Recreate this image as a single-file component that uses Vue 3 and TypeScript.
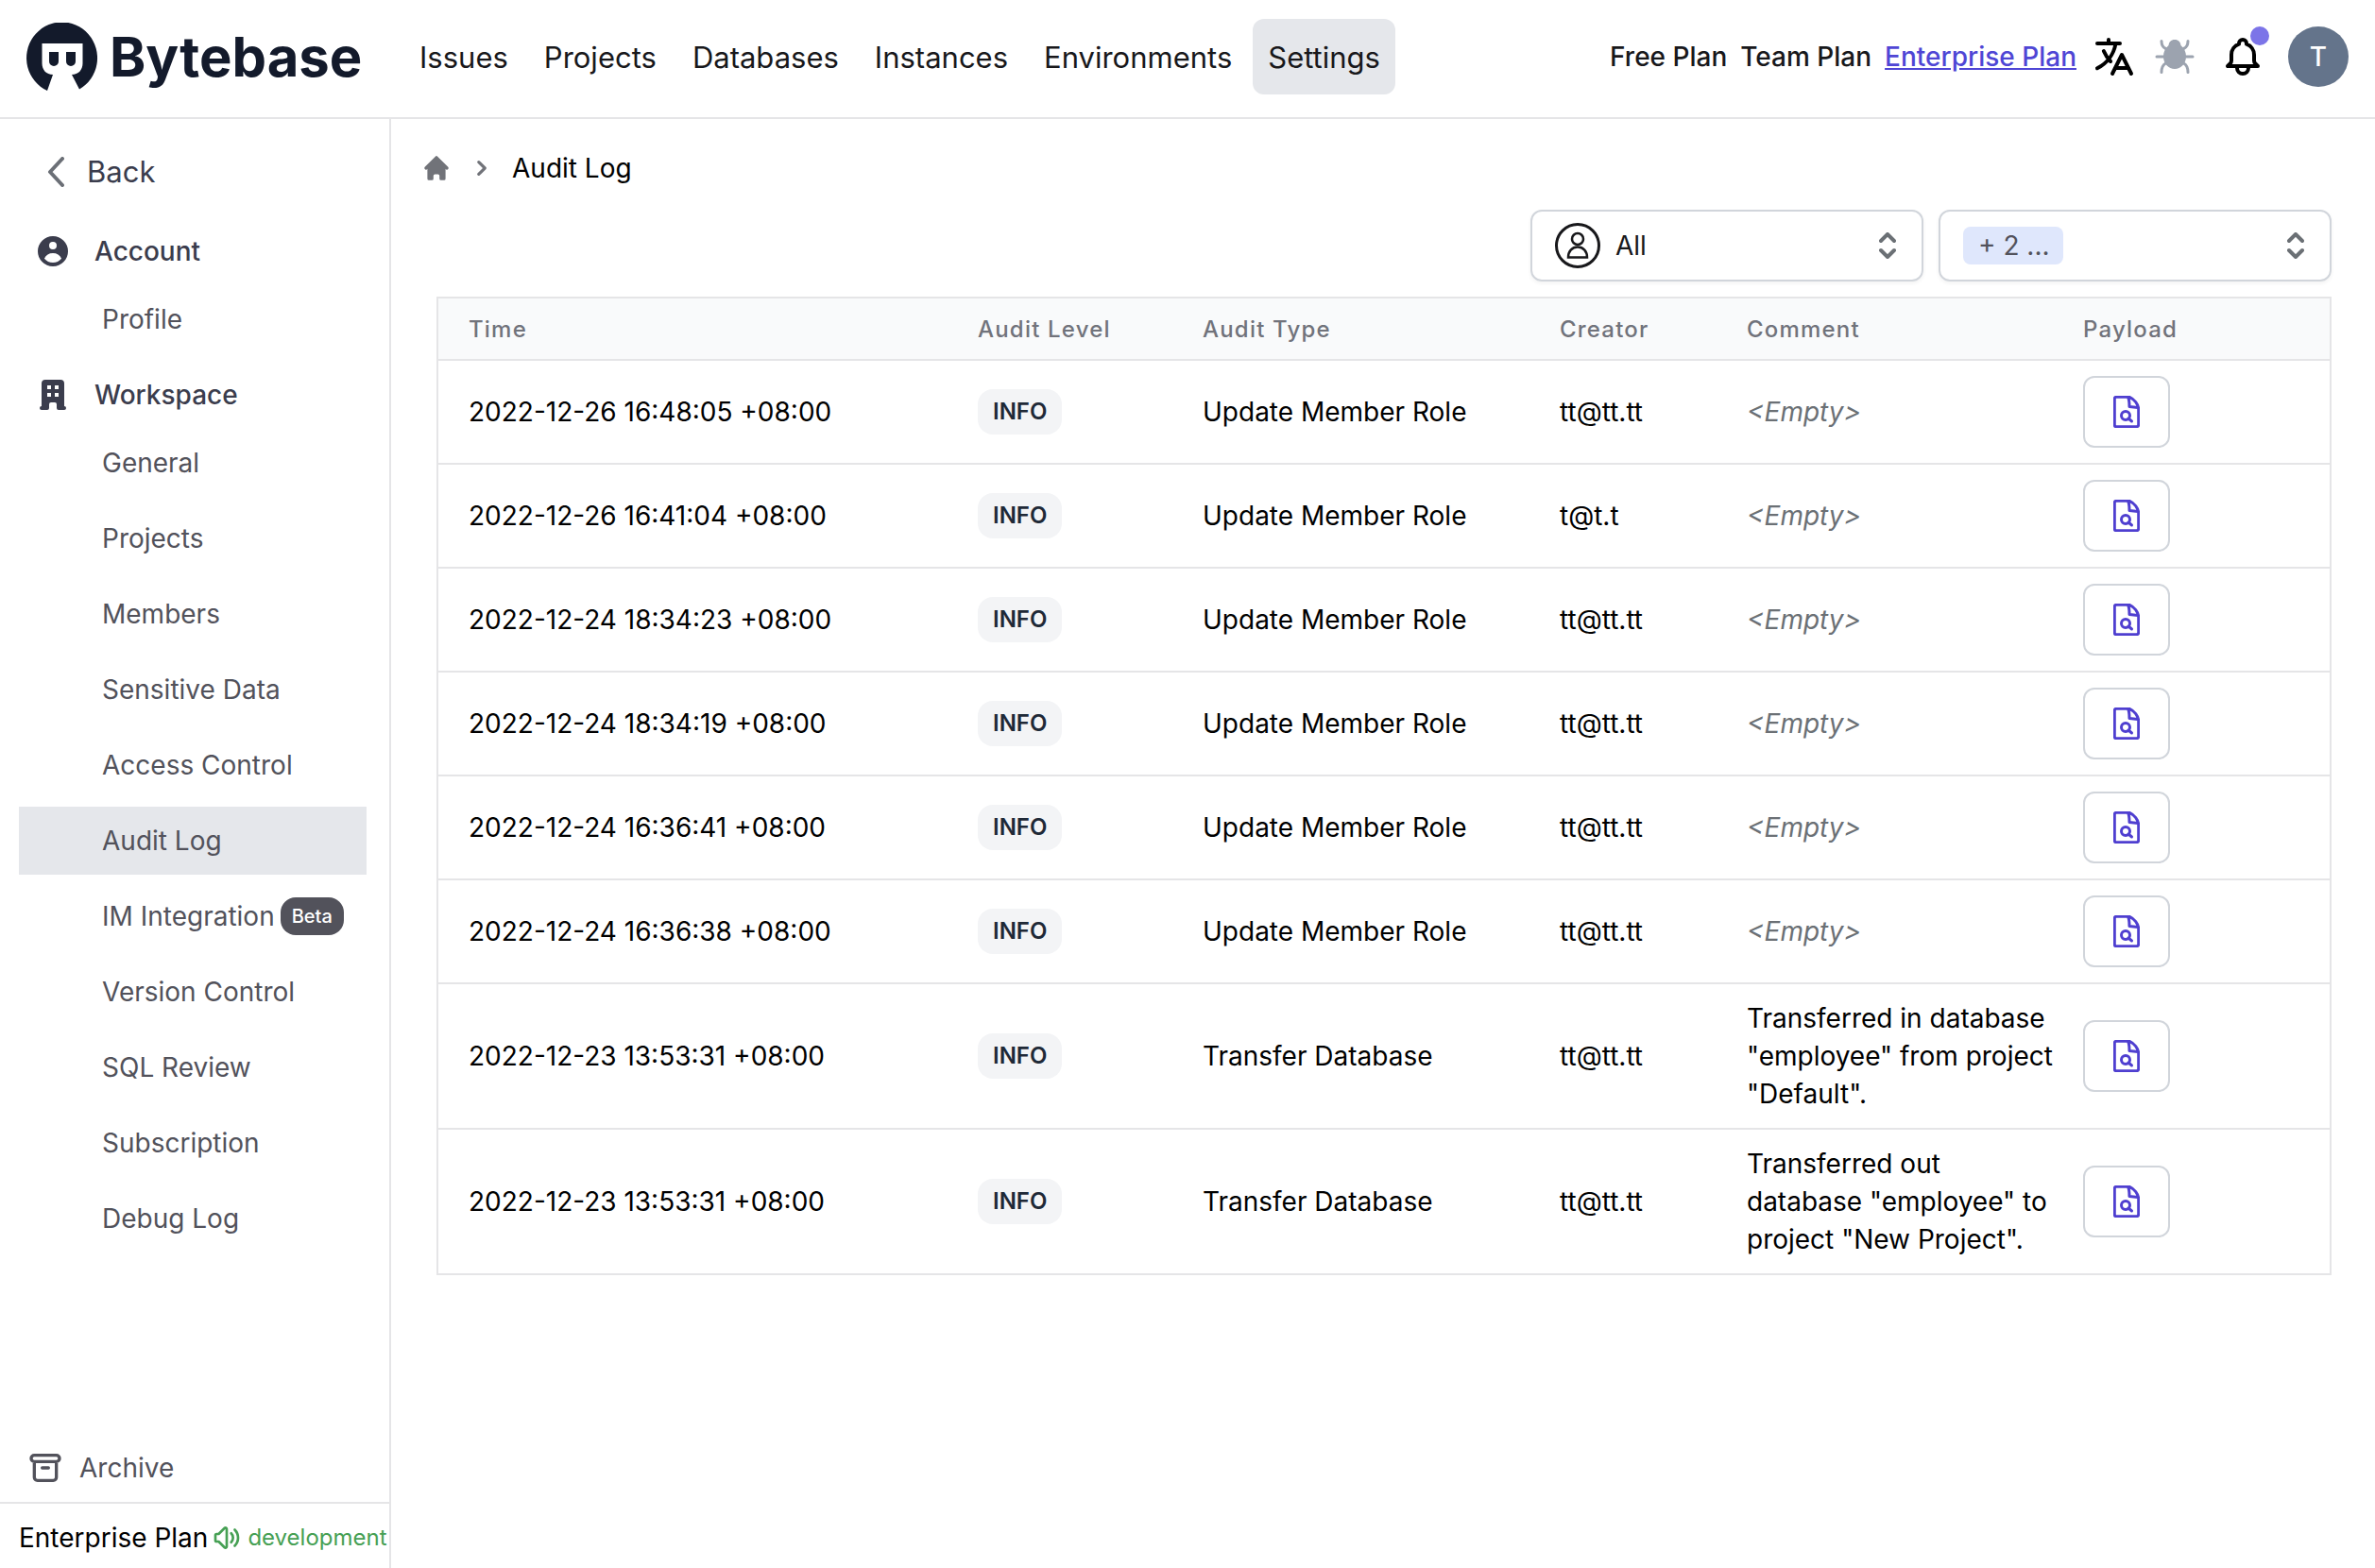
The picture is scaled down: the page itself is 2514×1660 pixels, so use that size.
<script setup lang="ts">
interface NavItem {
  label: string
  active?: boolean
  beta?: boolean
}

interface AuditRow {
  time: string
  type: string
  creator: string
  comment?: string
}

const mainNav: NavItem[] = [
  { label: 'Issues' },
  { label: 'Projects' },
  { label: 'Databases' },
  { label: 'Instances' },
  { label: 'Environments' },
  { label: 'Settings', active: true },
]

const plans: NavItem[] = [
  { label: 'Free Plan' },
  { label: 'Team Plan' },
  { label: 'Enterprise Plan', active: true },
]

const accountItems: NavItem[] = [{ label: 'Profile' }]

const workspaceItems: NavItem[] = [
  { label: 'General' },
  { label: 'Projects' },
  { label: 'Members' },
  { label: 'Sensitive Data' },
  { label: 'Access Control' },
  { label: 'Audit Log', active: true },
  { label: 'IM Integration', beta: true },
  { label: 'Version Control' },
  { label: 'SQL Review' },
  { label: 'Subscription' },
  { label: 'Debug Log' },
]

const columns: string[] = ['Time', 'Audit Level', 'Audit Type', 'Creator', 'Comment', 'Payload']

const rows: AuditRow[] = [
  { time: '2022-12-26 16:48:05 +08:00', type: 'Update Member Role', creator: 'tt@tt.tt' },
  { time: '2022-12-26 16:41:04 +08:00', type: 'Update Member Role', creator: 't@t.t' },
  { time: '2022-12-24 18:34:23 +08:00', type: 'Update Member Role', creator: 'tt@tt.tt' },
  { time: '2022-12-24 18:34:19 +08:00', type: 'Update Member Role', creator: 'tt@tt.tt' },
  { time: '2022-12-24 16:36:41 +08:00', type: 'Update Member Role', creator: 'tt@tt.tt' },
  { time: '2022-12-24 16:36:38 +08:00', type: 'Update Member Role', creator: 'tt@tt.tt' },
  {
    time: '2022-12-23 13:53:31 +08:00',
    type: 'Transfer Database',
    creator: 'tt@tt.tt',
    comment: 'Transferred in database "employee" from project "Default".',
  },
  {
    time: '2022-12-23 13:53:31 +08:00',
    type: 'Transfer Database',
    creator: 'tt@tt.tt',
    comment: 'Transferred out database "employee" to project "New Project".',
  },
]
</script>

<template>
  <div class="page">
    <header class="topbar">
      <a class="brand" href="#">
        <svg class="brand-mark" viewBox="28 22 76 72" aria-hidden="true">
          <path
            fill="currentColor"
            d="M50 94 L56 77 C49 77 44.500 72 44.500 65 V44 H87.500 V65 C87.500 72 83 77 76 77 L84 92.500 A37.500 38 0 1 0 50 94Z"
          />
          <path
            fill="currentColor"
            d="M52 53H62V63A5 5 0 0 1 52 63ZM70 53H80V63A5 5 0 0 1 70 63Z"
          />
        </svg>
        <span class="brand-name">Bytebase</span>
      </a>
      <nav class="main-nav">
        <a
          v-for="item in mainNav"
          :key="item.label"
          href="#"
          class="main-link"
          :class="{ active: item.active }"
          >{{ item.label }}</a
        >
      </nav>
      <div class="tools">
        <div class="plans">
          <a
            v-for="plan in plans"
            :key="plan.label"
            href="#"
            class="plan"
            :class="{ current: plan.active }"
            >{{ plan.label }}</a
          >
        </div>
        <button class="icon-btn" aria-label="Language">
          <svg class="i48 line" viewBox="0 0 24 24">
            <path
              d="M3 5h12M9 3v2m1.048 9.500A18.022 18.022 0 016.412 9m6.088 9h7M11 21l5-10 5 10M12.751 5C11.783 10.770 8.070 15.610 3 18.129"
            />
          </svg>
        </button>
        <button class="icon-btn bug" aria-label="Debug">
          <svg class="i48" viewBox="0 0 48 48">
            <path
              fill="currentColor"
              d="M24 6c4 0 6 2.500 6.500 6 3.500 3 5.500 7 5.500 11.500C36 31.500 30.500 37 24 37S12 31.500 12 23.500C12 19 14 15 17.500 12 18 8.500 20 6 24 6Z"
            />
            <path
              fill="none"
              stroke="currentColor"
              stroke-width="3"
              stroke-linecap="round"
              d="M10 7.500c0 4 1 6.500 4.500 8M38 7.500c0 4-1 6.500-4.500 8M5 24h38M10 40.500c0-5 1-7.500 4.500-9.500M38 40.500c0-5-1-7.500-4.500-9.500"
            />
          </svg>
        </button>
        <button class="icon-btn bell" aria-label="Inbox">
          <svg class="i48 line" viewBox="0 0 24 24">
            <path
              d="M15 17h5l-1.405-1.405A2.032 2.032 0 0118 14.158V11a6.002 6.002 0 00-4-5.659V5a2 2 0 10-4 0v.341C7.670 6.165 6 8.388 6 11v3.159c0 .538-.214 1.055-.595 1.436L4 17h5m6 0v1a3 3 0 11-6 0v-1m6 0H9"
            />
          </svg>
          <span class="dot"></span>
        </button>
        <button class="avatar" aria-label="User menu">T</button>
      </div>
    </header>

    <div class="body">
      <aside class="sidebar">
        <button class="back">
          <svg class="back-icon" viewBox="0 0 18 32" aria-hidden="true">
            <path d="M16 2 3 16l13 14" />
          </svg>
          Back
        </button>

        <div class="group">
          <div class="group-title">
            <svg class="i40" viewBox="0 0 20 20" aria-hidden="true">
              <path
                fill="currentColor"
                fill-rule="evenodd"
                d="M18 10a8 8 0 11-16 0 8 8 0 0116 0zm-6-3a2 2 0 11-4 0 2 2 0 014 0zm-2 4a5 5 0 00-4.546 2.916A5.986 5.986 0 0010 16a5.986 5.986 0 004.546-2.084A5 5 0 0010 11z"
              />
            </svg>
            Account
          </div>
          <nav class="side-nav">
            <a v-for="item in accountItems" :key="item.label" href="#" class="side-link">{{
              item.label
            }}</a>
          </nav>
        </div>

        <div class="group">
          <div class="group-title">
            <svg class="i40" viewBox="0 0 20 20" aria-hidden="true">
              <path
                fill="currentColor"
                fill-rule="evenodd"
                d="M4 4a2 2 0 012-2h8a2 2 0 012 2v12a1 1 0 110 2h-3a1 1 0 01-1-1v-2a1 1 0 00-1-1H9a1 1 0 00-1 1v2a1 1 0 01-1 1H4a1 1 0 110-2V4zm3 1h2v2H7V5zm2 4H7v2h2V9zm2-4h2v2h-2V5zm2 4h-2v2h2V9z"
              />
            </svg>
            Workspace
          </div>
          <nav class="side-nav">
            <a
              v-for="item in workspaceItems"
              :key="item.label"
              href="#"
              class="side-link"
              :class="{ active: item.active }"
              >{{ item.label }}<span v-if="item.beta" class="beta">Beta</span></a
            >
          </nav>
        </div>

        <a href="#" class="archive">
          <svg class="i40 line" viewBox="0 0 24 24" aria-hidden="true">
            <path
              d="M5 8h14M5 8a2 2 0 110-4h14a2 2 0 110 4M5 8v10a2 2 0 002 2h10a2 2 0 002-2V8m-9 4h4"
            />
          </svg>
          Archive
        </a>
        <div class="side-footer">
          <a href="#" class="footer-plan">Enterprise Plan</a>
          <a href="#" class="release">
            <svg class="i32 line" viewBox="0 0 24 24" aria-hidden="true">
              <path
                d="M15.536 8.464a5 5 0 010 7.072m2.828-9.900a9 9 0 010 12.728M5.586 15H4a1 1 0 01-1-1v-4a1 1 0 011-1h1.586l4.707-4.707C10.923 3.663 12 4.109 12 5v14c0 .891-1.077 1.337-1.707.707L5.586 15z"
              />
            </svg>
            development
          </a>
        </div>
      </aside>

      <main class="content">
        <nav class="crumbs" aria-label="Breadcrumb">
          <a href="#" class="crumb-home" aria-label="Home">
            <svg class="i32" viewBox="0 0 20 20">
              <path
                fill="currentColor"
                d="M10.707 2.293a1 1 0 00-1.414 0l-7 7a1 1 0 001.414 1.414L4 10.414V17a1 1 0 001 1h2a1 1 0 001-1v-2a1 1 0 011-1h2a1 1 0 011 1v2a1 1 0 001 1h2a1 1 0 001-1v-6.586l.293.293a1 1 0 001.414-1.414l-7-7z"
              />
            </svg>
          </a>
          <svg class="i32 crumb-sep" viewBox="0 0 20 20" aria-hidden="true">
            <path
              fill="currentColor"
              d="M7.293 14.707a1 1 0 010-1.414L10.586 10 7.293 6.707a1 1 0 011.414-1.414l4 4a1 1 0 010 1.414l-4 4a1 1 0 01-1.414 0z"
            />
          </svg>
          <span>Audit Log</span>
        </nav>

        <div class="filters">
          <div class="picker person">
            <svg class="person-icon" viewBox="0 0 48 48" aria-hidden="true">
              <circle cx="24" cy="24" r="22.500" stroke-width="3" />
              <circle cx="24" cy="17" r="6" stroke-width="2.500" />
              <path
                stroke-width="2.500"
                d="M14 36.500c0-6.500 4-11 10-11s10 4.500 10 11Z"
              />
            </svg>
            <select aria-label="Creator">
              <option>All</option>
            </select>
            <svg class="updown" viewBox="0 0 18 28" aria-hidden="true">
              <path d="M2 9 9 2l7 7M2 19l7 7 7-7" />
            </svg>
          </div>
          <div class="picker tags">
            <select aria-label="Audit type">
              <option>+ 2 ...</option>
            </select>
            <svg class="updown" viewBox="0 0 18 28" aria-hidden="true">
              <path d="M2 9 9 2l7 7M2 19l7 7 7-7" />
            </svg>
          </div>
        </div>

        <table class="log">
          <colgroup>
            <col />
            <col class="c-level" />
            <col class="c-type" />
            <col class="c-creator" />
            <col class="c-comment" />
            <col class="c-payload" />
          </colgroup>
          <thead>
            <tr>
              <th v-for="col in columns" :key="col" scope="col">{{ col }}</th>
            </tr>
          </thead>
          <tbody>
            <tr v-for="(row, i) in rows" :key="i">
              <td>{{ row.time }}</td>
              <td><span class="level">INFO</span></td>
              <td>{{ row.type }}</td>
              <td>{{ row.creator }}</td>
              <td>
                <template v-if="row.comment">{{ row.comment }}</template>
                <em v-else class="empty">&lt;Empty&gt;</em>
              </td>
              <td>
                <button class="payload" aria-label="View payload">
                  <svg viewBox="0 0 28 34" aria-hidden="true">
                    <path
                      d="M3.300 1.300H17C22 3.500 26.700 9 26.700 14.500V30.500Q26.700 32.700 24.500 32.700H3.300Q1.300 32.700 1.300 30.700V3.300Q1.300 1.300 3.300 1.300ZM15.500 1.500Q17 4 17 11.500L26 12.500"
                    />
                    <circle cx="13" cy="21" r="4.500" />
                    <path d="M16 24l3.500 3" />
                  </svg>
                </button>
              </td>
            </tr>
          </tbody>
        </table>
      </main>
    </div>
  </div>
</template>

<style>
body {
  background: #fff;
}
</style>

<style scoped>
* {
  box-sizing: border-box;
}

.page {
  display: flex;
  flex-direction: column;
  min-height: 100vh;
  font-family: Inter, 'Liberation Sans', sans-serif;
  font-size: 28px;
  line-height: 40px;
  color: #000;
}

a {
  color: inherit;
  text-decoration: none;
}

button,
select {
  font: inherit;
  color: inherit;
  margin: 0;
  padding: 0;
  border: 0;
  background: none;
  cursor: pointer;
}

svg {
  display: block;
  flex: none;
}

.i32 {
  width: 32px;
  height: 32px;
}

.i40 {
  width: 40px;
  height: 40px;
}

.i48 {
  width: 48px;
  height: 48px;
}

.line {
  fill: none;
  stroke: currentColor;
  stroke-width: 2;
  stroke-linecap: round;
  stroke-linejoin: round;
}

.topbar {
  display: flex;
  align-items: center;
  height: 126px;
  padding: 0 28px 4px;
  border-bottom: 2px solid #e5e5e7;
  color: #18181b;
}

.brand {
  display: flex;
  align-items: center;
  gap: 12px;
  width: 400px;
  color: #131a2b;
}

.brand-mark {
  width: 76px;
  height: 72px;
}

.brand-name {
  font-size: 58px;
  line-height: 64px;
  font-weight: 700;
}

.main-nav {
  display: flex;
  gap: 6px;
}

.main-link {
  padding: 17px 16px 15px;
  border-radius: 12px;
  font-size: 31px;
  line-height: 48px;
}

.main-link.active {
  background: #e5e7eb;
}

.tools {
  display: flex;
  align-items: center;
  gap: 16px;
  margin-left: auto;
}

.plans {
  display: flex;
  gap: 14px;
}

.plan {
  font-weight: 500;
}

.plan.current {
  color: #4f46d5;
  text-decoration: underline;
}

.icon-btn {
  position: relative;
  color: #000;
}

.bug {
  color: #9ca3af;
}

.bell {
  margin: 0 8px;
}

.dot {
  position: absolute;
  top: -8px;
  right: -4px;
  width: 20px;
  height: 20px;
  border-radius: 50%;
  background: #7c74e8;
}

.avatar {
  width: 64px;
  height: 64px;
  border-radius: 50%;
  background: #64748b;
  color: #fff;
  font-weight: 500;
}

.body {
  display: flex;
  flex: 1;
}

.sidebar {
  display: flex;
  flex: none;
  flex-direction: column;
  width: 414px;
  padding-top: 32px;
  border-right: 2px solid #e5e5e7;
}

.back {
  display: flex;
  align-items: center;
  gap: 24px;
  margin: 0 0 16px 50px;
  font-size: 31px;
  line-height: 48px;
  color: #3b3d4d;
}

.back-icon {
  width: 18px;
  height: 32px;
  fill: none;
  stroke: #6b6f76;
  stroke-width: 4;
  stroke-linecap: round;
  stroke-linejoin: round;
}

.group {
  margin-top: 24px;
}

.group-title {
  display: flex;
  align-items: center;
  gap: 24px;
  padding-left: 36px;
  font-weight: 500;
  color: #3b3d4d;
}

.side-nav {
  display: flex;
  flex-direction: column;
  gap: 8px;
  margin: 16px 24px 0 20px;
}

.side-link {
  display: flex;
  align-items: center;
  gap: 6px;
  padding: 16px 0 16px 88px;
  color: #52525b;
  white-space: nowrap;
}

.side-link.active {
  background: #e5e7eb;
}

.beta {
  padding: 4px 12px;
  border-radius: 16px;
  background: #52525b;
  color: #fff;
  font-size: 20px;
  line-height: 32px;
  font-weight: 500;
}

.archive {
  display: flex;
  align-items: center;
  gap: 16px;
  margin-top: auto;
  padding: 16px 28px;
  color: #52525b;
}

.side-footer {
  display: flex;
  gap: 4px;
  padding: 16px 0 12px 20px;
  border-top: 2px solid #e5e5e7;
  white-space: nowrap;
}

.release {
  display: flex;
  align-items: center;
  gap: 6px;
  font-size: 24px;
  color: #46a054;
}

.content {
  flex: 1;
  min-width: 0;
  padding: 32px 46px 32px 32px;
}

.crumbs {
  display: flex;
  align-items: center;
  gap: 16px;
}

.crumb-home,
.crumb-sep {
  color: #717379;
}

.filters {
  display: flex;
  justify-content: flex-end;
  gap: 16px;
  margin-top: 24px;
}

.picker {
  position: relative;
  width: 416px;
  height: 76px;
  border: 2px solid #d1d5db;
  border-radius: 12px;
  box-shadow: 0 2px 4px rgba(0, 0, 0, 0.05);
}

.picker select {
  position: relative;
  width: 100%;
  height: 100%;
  appearance: none;
  color: #18181b;
}

.person select {
  padding-left: 88px;
}

.person-icon {
  position: absolute;
  top: 12px;
  left: 24px;
  width: 48px;
  height: 48px;
  fill: none;
  stroke: #18181b;
}

.tags select {
  padding-left: 40px;
  color: #52525b;
}

.tags::before {
  content: '';
  position: absolute;
  top: 16px;
  left: 24px;
  width: 106px;
  height: 40px;
  border-radius: 8px;
  background: #dfe7fc;
}

.updown {
  position: absolute;
  top: 22px;
  right: 27px;
  width: 18px;
  height: 28px;
  fill: none;
  stroke: #6b7075;
  stroke-width: 4;
  stroke-linecap: round;
  stroke-linejoin: round;
  pointer-events: none;
}

.log {
  width: calc(100% - 16px);
  margin: 16px 0 0 16px;
  border: 2px solid #e5e5e7;
  border-collapse: collapse;
  table-layout: fixed;
}

.c-level {
  width: 238px;
}

.c-type {
  width: 378px;
}

.c-creator {
  width: 198px;
}

.c-comment {
  width: 356px;
}

.c-payload {
  width: 278px;
}

.log th,
.log td {
  padding: 16px;
  border-bottom: 2px solid #e5e5e7;
  text-align: left;
  vertical-align: middle;
}

.log th {
  padding: 17px 16px 15px;
  background: #f9fafb;
  color: #71737b;
  font-size: 24px;
  line-height: 32px;
  font-weight: 500;
  letter-spacing: 0.05em;
}

.log th:first-child,
.log td:first-child {
  padding-left: 32px;
}

.level {
  display: inline-block;
  padding: 8px 16px;
  border-radius: 16px;
  background: #f3f4f6;
  color: #1f2937;
  font-size: 24px;
  line-height: 32px;
  font-weight: 600;
  vertical-align: middle;
}

.empty {
  color: #6b7075;
}

.payload {
  display: flex;
  align-items: center;
  justify-content: center;
  width: 92px;
  height: 76px;
  border: 2px solid #d1d5db;
  border-radius: 12px;
}

.payload svg {
  width: 28px;
  height: 34px;
  fill: none;
  stroke: #4f3fd0;
  stroke-width: 3;
  stroke-linecap: round;
  stroke-linejoin: round;
}
</style>
